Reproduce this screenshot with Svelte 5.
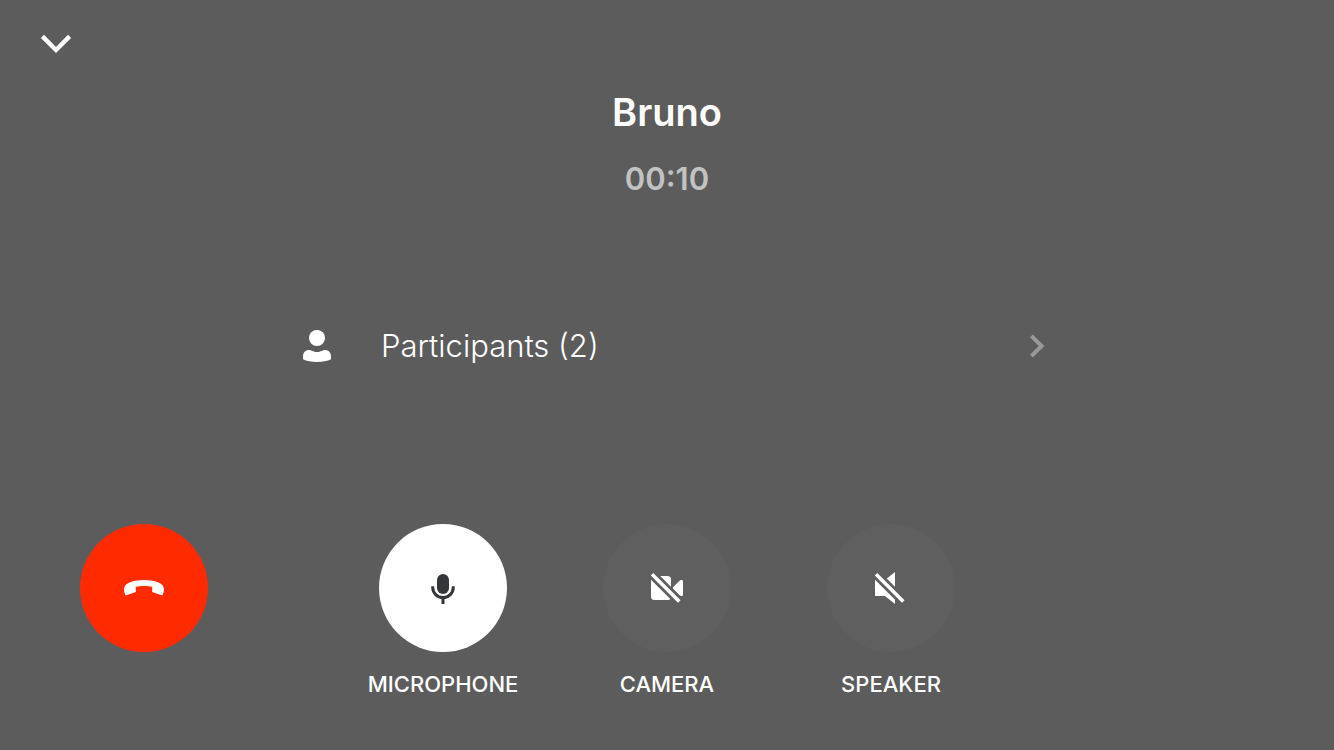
<script>
  let microphone = $state(true);
  let camera = $state(false);
  let speaker = $state(false);
</script>

<main class="call">
  <header class="top">
    <button class="minimize" type="button" aria-label="Minimize call">
      <svg width="32" height="24" viewBox="0 0 32 24" aria-hidden="true">
        <path d="M2.4 4.4 16 18 29.6 4.4" fill="none" stroke="currentColor" stroke-width="4.400" />
      </svg>
    </button>
  </header>

  <section class="caller">
    <h1>Bruno</h1>
    <p class="time">00:10</p>
  </section>

  <button class="participants" type="button">
    <svg width="32" height="32" viewBox="0 0 32 32" aria-hidden="true">
      <circle cx="16" cy="8" r="8" fill="currentColor" />
      <path d="M2 26.5C2 22.500 4.500 20 8 20C10.500 20 12 22 16 22C20 22 21.500 20 24 20C27.500 20 30 22.500 30 26.500V29.200C26.500 31 21.500 32 16 32C10.500 32 5.500 31 2 29.200Z" fill="currentColor" />
    </svg>
    <span>Participants (2)</span>
    <svg class="next" width="16" height="24" viewBox="0 0 16 24" aria-hidden="true">
      <path d="M1.400 1.800 11.600 12 1.400 22.200" fill="none" stroke="currentColor" stroke-width="4" />
    </svg>
  </button>

  <footer class="controls">
    <button class="round hangup" type="button" aria-label="Hang up">
      <svg width="48" height="48" viewBox="0 0 48 48" aria-hidden="true">
        <path d="M5.700 31.600C4.600 29.400 4 27.200 4 25C4 19 13.500 16 24 16S44 19 44 25C44 27.200 43.400 29.400 42.300 31.600L32.200 28V22.700C27.500 21.700 20.500 21.700 15.800 22.700V28Z" fill="currentColor" />
      </svg>
    </button>

    <div class="toggles">
      <div class="toggle">
        <button class="round" id="microphone" type="button" aria-pressed={microphone} aria-labelledby="microphone-label" onclick={() => (microphone = !microphone)}>
          <svg width="48" height="48" viewBox="0 0 48 48" aria-hidden="true">
            <rect x="18" y="10" width="12" height="20" rx="6" fill="currentColor" />
            <path d="M13.700 22.300V23.300A10.300 10.300 0 0 0 34.300 23.300V22.300M24 33.600V40" fill="none" stroke="currentColor" stroke-width="3" />
          </svg>
        </button>
        <label id="microphone-label" for="microphone">MICROPHONE</label>
      </div>

      <div class="toggle">
        <button class="round" id="camera" type="button" aria-pressed={camera} aria-labelledby="camera-label" onclick={() => (camera = !camera)}>
          <svg width="48" height="48" viewBox="0 0 48 48" aria-hidden="true">
            <mask id="slash" maskUnits="userSpaceOnUse" x="0" y="0" width="48" height="48">
              <rect width="48" height="48" fill="#fff" />
              <path d="M4 5.200 42 43.200" stroke="#000" stroke-width="9" />
            </mask>
            <g fill="currentColor" mask="url(#slash)">
              <rect x="8" y="12" width="20" height="24" rx="3.500" />
              <path d="M30.200 23 36.800 16.400Q37.300 16 38 16H38.800Q40 16 40 17.200V30.800Q40 32 38.800 32H38Q37.300 32 36.800 31.600L30.200 25Q29.400 24 30.200 23Z" />
            </g>
            <path d="M9 10.200 36.300 37.500" fill="none" stroke="currentColor" stroke-width="3.600" />
          </svg>
        </button>
        <label id="camera-label" for="camera">CAMERA</label>
      </div>

      <div class="toggle">
        <button class="round" id="speaker" type="button" aria-pressed={speaker} aria-labelledby="speaker-label" onclick={() => (speaker = !speaker)}>
          <svg width="48" height="48" viewBox="0 0 48 48" aria-hidden="true">
            <path d="M8 16H18L28 8V40L18 32H8Z" fill="currentColor" mask="url(#slash)" />
            <path d="M9 10.200 36.300 37.500" fill="none" stroke="currentColor" stroke-width="3.600" />
          </svg>
        </button>
        <label id="speaker-label" for="speaker">SPEAKER</label>
      </div>
    </div>
  </footer>
</main>

<style>
  :global(body) {
    margin: 0;
    background: #5c5c5c;
  }

  .call {
    box-sizing: border-box;
    min-height: 100vh;
    display: flex;
    flex-direction: column;
    padding: 32px 0 50px;
    color: #fff;
    font-family: Inter, "Liberation Sans", sans-serif;
  }

  button {
    margin: 0;
    padding: 0;
    border: 0;
    background: none;
    color: inherit;
    font: inherit;
    cursor: pointer;
  }

  svg {
    display: block;
    flex: none;
  }

  .top {
    display: flex;
    padding: 0 40px;
  }

  .caller {
    margin-top: 32px;
    text-align: center;
  }

  h1 {
    margin: 0;
    font-size: 38px;
    line-height: 48px;
    font-weight: 600;
  }

  .time {
    margin: 24px 0 0;
    color: #c2c2c2;
    font-size: 31px;
    line-height: 38px;
    font-weight: 600;
  }

  .participants {
    display: flex;
    align-items: center;
    gap: 48px;
    margin: 100px 288px 0 301px;
    padding: 24px 0;
    font-size: 31px;
    line-height: 48px;
    font-weight: 300;
    text-align: left;
  }

  .participants span {
    flex: 1;
  }

  .next {
    color: #999;
  }

  .controls {
    display: grid;
    grid-template-columns: 1fr auto 1fr;
    align-items: start;
    margin-top: auto;
    padding: 0 80px;
  }

  .toggles {
    display: flex;
    gap: 64px;
  }

  .toggle {
    width: 160px;
    display: flex;
    flex-direction: column;
    align-items: center;
    gap: 16px;
  }

  .round {
    width: 128px;
    height: 128px;
    display: grid;
    place-items: center;
    border-radius: 50%;
    background: #5f5f5f;
  }

  .round[aria-pressed="true"] {
    background: #fff;
    color: #33373a;
  }

  .hangup {
    background: #ff2a00;
  }

  label {
    font-size: 22px;
    line-height: 32px;
    font-weight: 500;
  }
</style>
